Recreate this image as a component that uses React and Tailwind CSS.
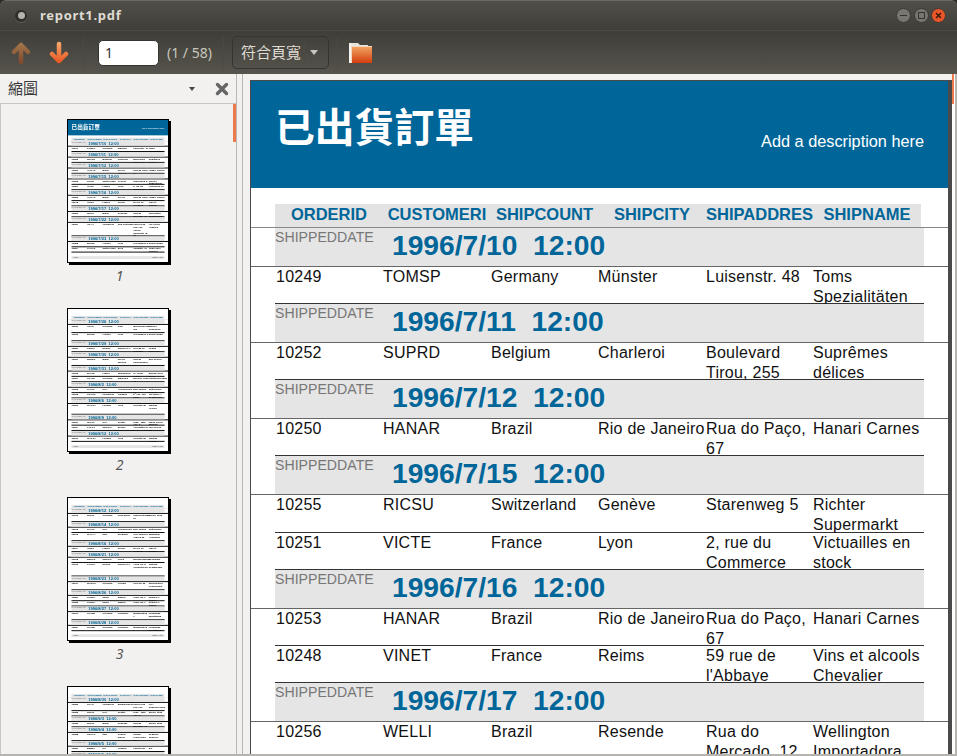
import React from 'react';

// Report content: each group is a shipped date plus its order rows.
// The optional seventh cell overrides the row height.
const page1 = [
  ['1996/7/10', [['10249', 'TOMSP', 'Germany', 'Münster', 'Luisenstr. 48', 'Toms Spezialitäten']]],
  ['1996/7/11', [['10252', 'SUPRD', 'Belgium', 'Charleroi', 'Boulevard Tirou, 255', 'Suprêmes délices']]],
  ['1996/7/12', [['10250', 'HANAR', 'Brazil', 'Rio de Janeiro', 'Rua do Paço, 67', 'Hanari Carnes']]],
  ['1996/7/15', [
    ['10255', 'RICSU', 'Switzerland', 'Genève', 'Starenweg 5', 'Richter Supermarkt', 'h-[38px]'],
    ['10251', 'VICTE', 'France', 'Lyon', '2, rue du Commerce', 'Victuailles en stock'],
  ]],
  ['1996/7/16', [
    ['10253', 'HANAR', 'Brazil', 'Rio de Janeiro', 'Rua do Paço, 67', 'Hanari Carnes'],
    ['10248', 'VINET', 'France', 'Reims', '59 rue de l\'Abbaye', 'Vins et alcools Chevalier'],
  ]],
  ['1996/7/17', [['10256', 'WELLI', 'Brazil', 'Resende', 'Rua do Mercado, 12', 'Wellington Importadora']]],
  ['1996/7/22', [['10257', 'HILAA', 'Venezuela', 'San Cristóbal', 'Carrera 22 con Ave. Carlos Soublette #8-35', 'HILARIÓN-Abastos', 'h-[94px]']]],
  ['1996/7/23', [
    ['10258', 'ERNSH', 'Austria', 'Graz', 'Kirchgasse 6', 'Ernst Handel'],
    ['10254', 'CHOPS', 'Switzerland', 'Bern', 'Hauptstr. 31', 'Chop-suey Chinese'],
  ]],
];

const page2 = [
  ['1996/7/26', [
    ['10260', 'OTTIK', 'Germany', 'Köln', 'Mehrheimerstr. 369', 'Ottilies Käseladen', 'h-[57px]'],
    ['10263', 'ERNSH', 'Austria', 'Graz', 'Kirchgasse 6', 'Ernst Handel', 'h-[57px]'],
  ]],
  ['1996/7/29', [['10259', 'CENTC', 'Mexico', 'México D.F.', 'Sierras de Granada 9993', 'Centro comercial']]],
  ['1996/7/30', [['10261', 'QUEDE', 'Brazil', 'Rio de Janeiro', 'Rua da Panificadora, 12', 'Que Delícia', 'h-[57px]']]],
  ['1996/7/31', [
    ['10265', 'BLONP', 'France', 'Strasbourg', '24, place Kléber', 'Blondel père et fils'],
    ['10267', 'FRANK', 'Germany', 'München', 'Berliner Platz 43', 'Frankenversand'],
  ]],
  ['1996/8/2', [
    ['10262', 'RATTC', 'USA', 'Albuquerque', '2817 Milton Dr.', 'Rattlesnake Canyon'],
    ['10268', 'GROSR', 'Venezuela', 'Caracas', '5ª Ave. Los Palos', 'GROSELLA-Restaurante'],
  ]],
  ['1996/8/6', [['10266', 'WARTH', 'Finland', 'Oulu', 'Torikatu 38', 'Wartian Herkku', 'h-[75px]']]],
  ['1996/8/9', [
    ['10269', 'WHITC', 'USA', 'Seattle', '1029 - 12th Ave. S.', 'White Clover Markets'],
    ['10264', 'FOLKO', 'Sweden', 'Bräcke', 'Åkergatan 24', 'Folk och fä HB'],
  ]],
  ['1996/8/12', [['10270', 'WARTH', 'Finland', 'Oulu', 'Torikatu 38', 'Wartian Herkku']]],
];

const page3 = [
  ['1996/8/12', [['10273', 'QUICK', 'Germany', 'Cunewalde', 'Taucherstraße 10', 'QUICK-Stop', 'h-[57px]']]],
  ['1996/8/14', [
    ['10272', 'RATTC', 'USA', 'Albuquerque', '2817 Milton Dr.', 'Rattlesnake Canyon'],
    ['10275', 'MAGAA', 'Italy', 'Bergamo', 'Via Ludovico il Moro 22', 'Magazzini Alimentari', 'h-[57px]'],
  ]],
  ['1996/8/16', [['10274', 'VINET', 'France', 'Reims', '59 rue de l\'Abbaye', 'Vins et alcools']]],
  ['1996/8/21', [
    ['10278', 'BERGS', 'Sweden', 'Luleå', 'Berguvsvägen 8', 'Berglunds snabbköp'],
    ['10276', 'TORTU', 'Mexico', 'México D.F.', 'Avda. de la Constitución', 'Tortuga Restaurante', 'h-[94px]'],
  ]],
  ['1996/8/23', [['10277', 'MORGK', 'Germany', 'Leipzig', 'Heerstr. 22', 'Morgenstern Gesundkost', 'h-[57px]']]],
  ['1996/8/26', [
    ['10281', 'ROMEY', 'Spain', 'Madrid', 'Gran Vía, 1', 'Romero y tomillo'],
    ['10282', 'ROMEY', 'Spain', 'Madrid', 'Gran Vía, 1', 'Romero y tomillo'],
  ]],
  ['1996/8/27', [['10279', 'LEHMS', 'Germany', 'Frankfurt', 'Magazinweg 7', 'Lehmanns Marktstand', 'h-[57px]']]],
  ['1996/8/28', [['10284', 'LEHMS', 'Germany', 'Frankfurt', 'Magazinweg 7', 'Lehmanns Marktstand']]],
];

const page4 = [
  ['1996/8/30', [
    ['10283', 'LILAS', 'Venezuela', 'Barquisimeto', 'Carrera 52 con Ave. Bolívar', 'LILA-Supermercado', 'h-[57px]'],
    ['10285', 'QUICK', 'USA', 'Seattle', '1029 - 12th Ave. S.', 'QUICK-Stop'],
  ]],
  ['1996/9/3', [['10286', 'QUICK', 'Brazil', 'Resende', 'Rua do Mercado, 12', 'QUICK-Stop']]],
  ['1996/9/4', [['10288', 'REGGC', 'Italy', 'Reggio Emilia', 'Strada Provinciale 124', 'Reggiani Caseifici', 'h-[57px]']]],
  ['1996/9/5', [['10289', 'BSBEV', 'UK', 'London', 'Fauntleroy Circus', 'B\'s Beverages']]],
  ['1996/9/6', [['10290', 'COMMI', 'Brazil', 'São Paulo', 'Av. dos Lusíadas, 23', 'Comércio Mineiro']]],
];

const columns = 'grid grid-cols-[108px_108px_107px_108px_107px_112px]';

function GroupRow({ date, thumb }) {
  return (
    <div className={`h-[39px] border-b ${thumb ? 'border-b-[7px] border-[#111]' : 'border-[#666]'}`}>
      <div className="mx-[24px] flex h-full bg-[#e5e5e5]">
        <span className="w-[117px] text-[14.15px] leading-[18px] text-[#777]">SHIPPEDDATE</span>
        <span className="whitespace-pre text-[28.2px] leading-[34px] font-bold text-[#006699]">{date}  12:00</span>
      </div>
    </div>
  );
}

function DataRow({ cells, thumb }) {
  const height = cells[6] || 'h-[37px]';
  return (
    <div className={`mx-[24px] ${columns} ${height} border-b ${thumb ? 'border-b-[7px] border-[#111] font-bold text-black' : 'border-[#333] text-[#111]'} text-[16px] leading-[19.5px] tracking-[0.25px]`}>
      {cells.slice(0, 6).map((cell, i) => (
        <div key={i} className={i === 0 ? 'pl-px' : ''}>{cell}</div>
      ))}
    </div>
  );
}

function Page({ groups, banner, thumb }) {
  return (
    <div className="flex h-[983px] w-[697px] flex-col bg-white font-['Liberation_Sans','Noto_Sans_CJK_TC',sans-serif]">
      {banner ? (
        <div className="flex h-[107px] shrink-0 items-start justify-between bg-[#006699] pr-[24px] pl-[24px] text-white">
          <div className="mt-[16px] font-['Noto_Sans_CJK_TC',sans-serif] text-[39.8px] leading-[56px] font-semibold">已出貨訂單</div>
          <div className="mt-[49px] text-[16.3px] leading-[22px]">Add a description here</div>
        </div>
      ) : (
        <div className="h-[32px] shrink-0" />
      )}
      <div className="mt-[16px] h-[24px] shrink-0 border-b border-[#888]">
        <div className="mx-[24px] grid h-full w-[646px] grid-cols-[108px_108px_107px_108px_107px_108px] bg-[#e3e3e3] text-center text-[16.5px] leading-[20px] font-bold text-[#006699]">
          {['ORDERID', 'CUSTOMERI', 'SHIPCOUNT', 'SHIPCITY', 'SHIPADDRES', 'SHIPNAME'].map((h) => (
            <div key={h} className="overflow-hidden whitespace-nowrap">{h}</div>
          ))}
        </div>
      </div>
      {groups.map(([date, rows]) => (
        <div key={date} className="shrink-0">
          <GroupRow date={date} thumb={thumb} />
          {rows.map((cells) => (
            <DataRow key={cells[0]} cells={cells} thumb={thumb} />
          ))}
        </div>
      ))}
      <div className="mx-[24px] mt-auto mb-[14px] flex h-[20px] justify-between bg-[#e5e5e5] px-[14px] text-[14px] text-[#333]">
        <span>1996</span>
        <span>Page 1 / 58</span>
      </div>
    </div>
  );
}

function Thumbnail({ groups, banner, label }) {
  return (
    <div className="flex h-[189px] shrink-0 flex-col items-center">
      <div className="h-[144px] w-[102px] shrink-0 overflow-hidden border border-black bg-white shadow-[2px_2px_0_#000]">
        <div className="blur-[0.35px]">
          <div className="origin-top-left scale-[0.1435]">
            <Page groups={groups} banner={banner} thumb />
          </div>
        </div>
      </div>
      <div className="mt-[4px] ml-[4px] font-['Noto_Sans',sans-serif] text-[14px] leading-[18px] text-[#555] italic">{label}</div>
    </div>
  );
}

function UpArrow() {
  return (
    <svg width="20" height="24" viewBox="0 0 20 24" fill="none">
      <defs>
        <linearGradient id="arrowDim" x1="0" y1="1" x2="0" y2="23" gradientUnits="userSpaceOnUse">
          <stop offset="0" stopColor="#a5784e" />
          <stop offset="1" stopColor="#7f472a" />
        </linearGradient>
      </defs>
      <path d="M10 21V4M3 11l7-7 7 7" stroke="url(#arrowDim)" strokeWidth="4.5" strokeLinecap="round" strokeLinejoin="round" />
    </svg>
  );
}

function DownArrow() {
  return (
    <svg width="20" height="24" viewBox="0 0 20 24" fill="none">
      <defs>
        <linearGradient id="arrowHot" x1="0" y1="1" x2="0" y2="23" gradientUnits="userSpaceOnUse">
          <stop offset="0" stopColor="#f6ab6c" />
          <stop offset="1" stopColor="#e9501c" />
        </linearGradient>
      </defs>
      <path d="M10 3v17M3 13l7 7 7-7" stroke="url(#arrowHot)" strokeWidth="4.5" strokeLinecap="round" strokeLinejoin="round" />
    </svg>
  );
}

function FolderIcon() {
  return (
    <svg width="25" height="22" viewBox="0 0 25 22">
      <defs>
        <linearGradient id="folderFill" x1="0" y1="5" x2="0" y2="21" gradientUnits="userSpaceOnUse">
          <stop offset="0" stopColor="#f0a161" />
          <stop offset="1" stopColor="#d43f0e" />
        </linearGradient>
      </defs>
      <path d="M1 1h9l2 2h8v3H1z" fill="#e6e4df" />
      <path d="M1 1h2v20H1z" fill="#f4f3f0" />
      <path d="M4 5h20v16H4z" fill="url(#folderFill)" />
      <path d="M3 4h21v1H4v16H3z" fill="#f6d9bd" />
    </svg>
  );
}

function WindowButton({ className, children }) {
  return (
    <div className={`flex h-[15px] w-[15px] items-center justify-center rounded-full border border-[#3a3934] ${className}`}>
      {children}
    </div>
  );
}

function Separator() {
  return <div className="h-[30px] w-px bg-[#4b4a44]" />;
}

export default function App() {
  return (
    <div className="flex h-[756px] w-[957px] flex-col overflow-hidden bg-[#2c2b27] font-['Noto_Sans','Noto_Sans_CJK_TC',sans-serif]">
      {/* Title bar */}
      <div className="flex h-[30px] shrink-0 items-center rounded-t-[6px] border-t border-[#6a6962] bg-gradient-to-b from-[#504f48] to-[#3f3e39] pr-[11px] pl-[15px]">
        <div className="flex h-[12px] w-[12px] items-center justify-center rounded-full bg-[#2f2e2a] shadow-[0_1px_0_#5f5e57]">
          <div className="h-[7px] w-[7px] rounded-full bg-[#b5b3ac]" />
        </div>
        <div className="ml-[13px] text-[13px] font-bold tracking-[0.7px] text-[#dfdbd2]">report1.pdf</div>
        <div className="ml-auto flex gap-[2.5px]">
          <WindowButton className="bg-[#77766f]">
            <div className="h-[1.5px] w-[7px] bg-[#33322e]" />
          </WindowButton>
          <WindowButton className="bg-[#77766f]">
            <div className="h-[7px] w-[7px] border border-[#33322e]" />
          </WindowButton>
          <WindowButton className="bg-[#e9562a] text-[#3a1a0c]">
            <svg width="7" height="7" viewBox="0 0 7 7" stroke="currentColor" strokeWidth="1.5">
              <path d="M1 1l5 5M6 1L1 6" />
            </svg>
          </WindowButton>
        </div>
      </div>

      {/* Toolbar */}
      <div className="flex h-[44px] shrink-0 items-center border-t border-[#4a4943] bg-gradient-to-b from-[#3f3e39] to-[#56544c] pl-[11px]">
        <UpArrow />
        <div className="ml-[18px]"><DownArrow /></div>
        <div className="ml-[14px]"><Separator /></div>
        <div className="ml-[14px] flex h-[26px] w-[61px] items-center rounded-[5px] border border-[#35342f] bg-white pl-[6px] text-[14px] text-[#333]">1</div>
        <div className="ml-[8px] text-[14px] text-[#c9c6bd]">(1 / 58)</div>
        <div className="ml-[11px]"><Separator /></div>
        <div className="ml-[8px] flex h-[33px] w-[97px] items-center rounded-[5px] border border-[#35342f] pl-[8px] text-[15px] text-[#dfdbd2]">
          <span>符合頁寬</span>
          <div className="ml-[3px] h-[20px] w-px bg-[#4b4a44]" />
          <div className="ml-[5px] h-0 w-0 border-x-[4px] border-t-[5px] border-x-transparent border-t-[#c9c6bd]" />
        </div>
        <div className="ml-[8px]"><Separator /></div>
        <div className="ml-[10px]"><FolderIcon /></div>
      </div>

      {/* Body */}
      <div className="flex min-h-0 flex-1 border-r-2 border-b-2 border-[#b6b4ae] bg-[#f2f1f0]">
        <aside className="flex w-[237px] shrink-0 flex-col border-r border-[#b9b7b1]">
          <div className="flex h-[30px] shrink-0 items-center border-b border-[#c9c7c2] pr-[7px] pl-[8px] text-[15px] text-[#3c3c3c]">
            <span>縮圖</span>
            <div className="ml-auto h-0 w-0 border-x-[3.5px] border-t-[4px] border-x-transparent border-t-[#444]" />
            <svg className="ml-[20px]" width="14" height="14" viewBox="0 0 14 14" stroke="#666" strokeWidth="3.4" strokeLinecap="round">
              <path d="M2.5 2.5l9 9M11.5 2.5l-9 9" />
            </svg>
          </div>
          <div className="flex min-h-0 flex-1 overflow-hidden">
            <div className="flex min-w-0 flex-1 flex-col items-center overflow-hidden border-l border-[#c9c7c2] pt-[15px] pl-[1px]">
              <Thumbnail groups={page1} banner label="1" />
              <Thumbnail groups={page2} label="2" />
              <Thumbnail groups={page3} label="3" />
              <Thumbnail groups={page4} label="4" />
            </div>
            <div className="w-[3px] shrink-0">
              <div className="h-[38px] bg-[#ee7a4d]" />
            </div>
          </div>
        </aside>

        {/* Document pane */}
        <div className="w-[6px] shrink-0 border-r border-[#b9b7b1]" />
        <div className="flex min-w-0 flex-1 overflow-hidden">
          <div className="mt-[6px] ml-[7px] w-[702px] shrink-0 overflow-hidden border-t border-r-4 border-l border-[#4a4a4a]">
            <Page groups={page1} banner />
          </div>
          <div className="w-[3px] shrink-0 bg-white">
            <div className="h-[30px] w-[2px] bg-[#ee7a4d]" />
          </div>
        </div>
      </div>
    </div>
  );
}
